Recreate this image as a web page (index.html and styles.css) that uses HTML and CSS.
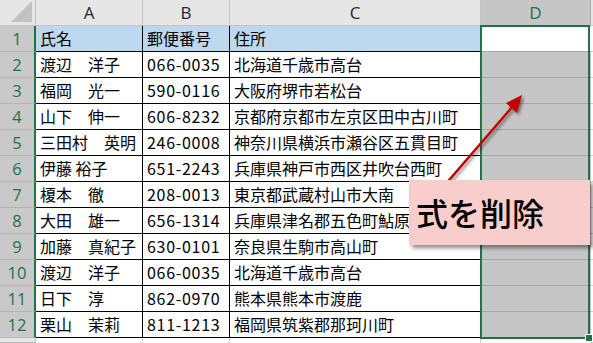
FILE: index.html
```html
<!DOCTYPE html>
<html lang="ja">
<head>
<meta charset="utf-8">
<link rel="stylesheet" href="styles.css">
</head>
<body>
<div class="sheet">
  <div class="corner"><span class="tri"></span></div>
  <div class="ch">A</div>
  <div class="ch">B</div>
  <div class="ch">C</div>
  <div class="ch ch-sel">D</div>
  <div class="ch ch-end"></div>

  <div class="rh">1</div><div class="c hd">氏名</div><div class="c hd">郵便番号</div><div class="c hd">住所</div><div class="d d-active"></div><div class="e"></div>
  <div class="rh">2</div><div class="c">渡辺　洋子</div><div class="c num">066-0035</div><div class="c">北海道千歳市高台</div><div class="d"></div><div class="e"></div>
  <div class="rh">3</div><div class="c">福岡　光一</div><div class="c num">590-0116</div><div class="c">大阪府堺市若松台</div><div class="d"></div><div class="e"></div>
  <div class="rh">4</div><div class="c">山下　伸一</div><div class="c num">606-8232</div><div class="c">京都府京都市左京区田中古川町</div><div class="d"></div><div class="e"></div>
  <div class="rh">5</div><div class="c">三田村　英明</div><div class="c num">246-0008</div><div class="c">神奈川県横浜市瀬谷区五貫目町</div><div class="d"></div><div class="e"></div>
  <div class="rh">6</div><div class="c">伊藤 裕子</div><div class="c num">651-2243</div><div class="c">兵庫県神戸市西区井吹台西町</div><div class="d"></div><div class="e"></div>
  <div class="rh">7</div><div class="c">榎本　徹</div><div class="c num">208-0013</div><div class="c">東京都武蔵村山市大南</div><div class="d"></div><div class="e"></div>
  <div class="rh">8</div><div class="c">大田　雄一</div><div class="c num">656-1314</div><div class="c">兵庫県津名郡五色町鮎原</div><div class="d"></div><div class="e"></div>
  <div class="rh">9</div><div class="c">加藤　真紀子</div><div class="c num">630-0101</div><div class="c">奈良県生駒市高山町</div><div class="d"></div><div class="e"></div>
  <div class="rh">10</div><div class="c">渡辺　洋子</div><div class="c num">066-0035</div><div class="c">北海道千歳市高台</div><div class="d"></div><div class="e"></div>
  <div class="rh">11</div><div class="c">日下　淳</div><div class="c num">862-0970</div><div class="c">熊本県熊本市渡鹿</div><div class="d"></div><div class="e"></div>
  <div class="rh">12</div><div class="c">栗山　茉莉</div><div class="c num">811-1213</div><div class="c">福岡県筑紫郡那珂川町</div><div class="d"></div><div class="e"></div>

  <div class="rh rh-plain"></div><div class="g"></div><div class="g"></div><div class="g"></div><div class="g"></div><div class="e"></div>

  <div class="selection"><span class="handle"></span></div>

  <svg class="arrow" width="593" height="343" viewBox="0 0 593 343">
    <defs>
      <filter id="sh" x="-20%" y="-20%" width="140%" height="140%">
        <feDropShadow dx="2" dy="2" stdDeviation="1.5" flood-color="#000" flood-opacity="0.45"/>
      </filter>
    </defs>
    <g filter="url(#sh)">
      <line x1="444" y1="186" x2="513" y2="106" stroke="#c00000" stroke-width="2.5"/>
      <polygon points="522,95 517,113 506,103" fill="#c00000"/>
    </g>
  </svg>

  <div class="callout">式を削除</div>
</div>
</body>
</html>
```

FILE: styles.css
```css
html, body {
  margin: 0;
  padding: 0;
  background: #ffffff;
}

.sheet {
  position: relative;
  width: 593px;
  height: 343px;
  overflow: hidden;
  display: grid;
  grid-template-columns: 36px 107px 87px 251px 110px 2px;
  grid-template-rows: 26px repeat(12, 26px) 5px;
  font-family: "Noto Sans CJK JP", "Noto Sans", sans-serif;
  font-size: 16px;
  color: #000;
}

.corner {
  position: relative;
  background: #e6e6e6;
  border-right: 1px solid #c4c4c4;
  border-bottom: 1px solid #c4c4c4;
  box-sizing: border-box;
  overflow: hidden;
}
.tri {
  position: absolute;
  right: 3px;
  bottom: 3px;
  width: 0;
  height: 0;
  border-left: 21px solid transparent;
  border-bottom: 21px solid #c2c2c2;
}

.ch {
  background: #e6e6e6;
  border-right: 1px solid #c4c4c4;
  border-bottom: 1px solid #c4c4c4;
  box-sizing: border-box;
  display: flex;
  align-items: center;
  justify-content: center;
  font-family: "Open Sans", "Liberation Sans", sans-serif;
  font-size: 17px;
  color: #262626;
  padding-bottom: 1px;
}
.ch-sel {
  background: #c6c6c6;
  color: #217346;
  border-right-color: #ababab;
}
.ch-end {
  border-right: none;
}

.rh {
  background: #c9c9c9;
  border-right: 2px solid #217346;
  border-bottom: 1px solid #b4b4b4;
  box-sizing: border-box;
  display: flex;
  align-items: center;
  justify-content: center;
  font-family: "Open Sans", "Liberation Sans", sans-serif;
  font-size: 16.5px;
  color: #217346;
  padding-bottom: 1px;
}
.rh-plain {
  background: #e6e6e6;
  border-right: 1px solid #c4c4c4;
}

.c {
  border-right: 1px solid #000;
  border-bottom: 1px solid #000;
  box-sizing: border-box;
  padding: 0 0 2px 4px;
  line-height: 24px;
  white-space: nowrap;
  overflow: visible;
}
.hd {
  background: #bdd7ee;
}
.num {
  letter-spacing: 0.7px;
}

.d {
  background: #c6c6c6;
  border-bottom: 1px solid #a6a6a6;
  box-sizing: border-box;
}
.d-active {
  background: #ffffff;
}
.e {
  background: #ffffff;
  border-bottom: 1px solid #d4d4d4;
  box-sizing: border-box;
}
.g {
  background: #ffffff;
  border-right: 1px solid #d4d4d4;
  box-sizing: border-box;
}

.selection {
  position: absolute;
  left: 480px;
  top: 25px;
  width: 110px;
  height: 314px;
  border: 2px solid #217346;
  box-sizing: border-box;
}
.handle {
  position: absolute;
  right: -5px;
  bottom: -5px;
  width: 6px;
  height: 6px;
  background: #217346;
  border: 1px solid #ffffff;
}

.arrow {
  position: absolute;
  left: 0;
  top: 0;
}

.callout {
  position: absolute;
  left: 409px;
  top: 180px;
  width: 181px;
  height: 65px;
  box-sizing: border-box;
  background: #f8cecc;
  box-shadow: 3px 3px 4px rgba(0, 0, 0, 0.45);
  display: flex;
  align-items: center;
  padding-left: 7px;
  padding-bottom: 1px;
  font-size: 32px;
  font-weight: 500;
  color: #000;
}
```
